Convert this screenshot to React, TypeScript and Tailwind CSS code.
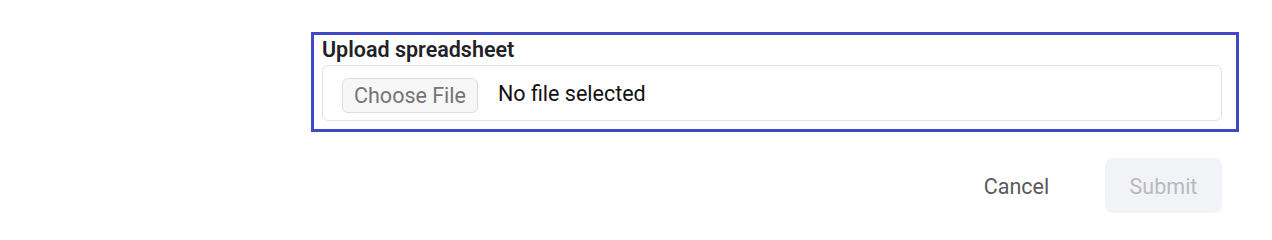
export default function App() {
  return (
    <div className="min-h-[220px] w-[1272px] bg-white font-['Roboto',sans-serif]">
      <div className="flex flex-col items-end pt-8 pr-[33px]">
        <div className="w-[928px] h-[100px] border-[3px] border-[#4048c8] pl-2 pr-[14px] pt-[2px]">
          <div className="text-[21.5px] leading-[25px] font-semibold text-[#1f2328]">Upload spreadsheet</div>
          <div className="mt-[3px] h-[56px] rounded-md border border-[#e2e2e2] flex items-center pl-[19px]">
            <span className="mt-1 h-[35px] w-[136px] rounded-md border border-[#dedede] bg-[#f7f7f7] flex items-center justify-center pt-[2px] text-[21.5px] text-[#757575]">
              Choose File
            </span>
            <span className="ml-5 mt-[2px] text-[21.5px] text-[#111111]">No file selected</span>
          </div>
        </div>
        <div className="mt-[26px] mr-[17px] flex items-center gap-[30px]">
          <button className="h-[55px] w-[117px] pt-[3px] text-[21.5px] text-[#5a5a5a]">Cancel</button>
          <button className="h-[55px] w-[117px] pt-[3px] rounded-lg bg-[#f2f3f7] text-[21.5px] text-[#b9b9bf]">Submit</button>
        </div>
      </div>
    </div>
  );
}
